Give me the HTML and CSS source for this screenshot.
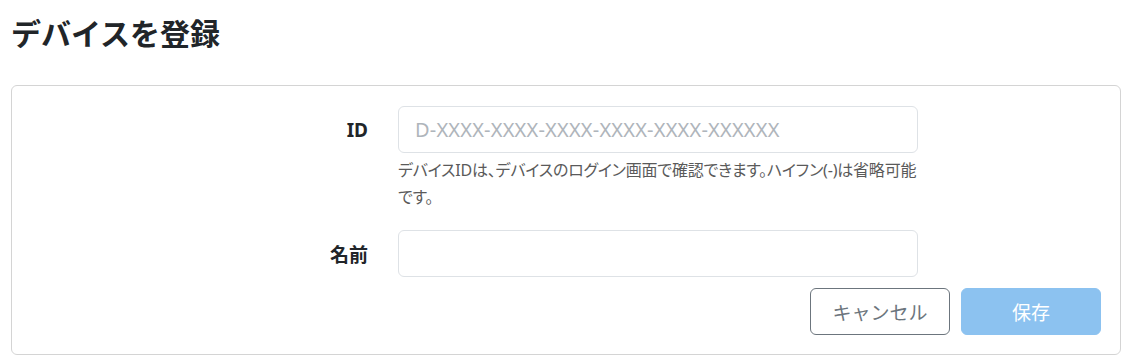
FILE: index.html
```html
<!DOCTYPE html>
<html lang="ja">
<head>
<meta charset="utf-8">
<title>デバイスを登録</title>
<link rel="stylesheet" href="styles.css">
</head>
<body>
<div class="page">
  <h1 class="title">デバイスを登録</h1>
  <form class="card">
    <div class="form-grid">
      <label class="label" for="device-id">ID</label>
      <input class="input" id="device-id" type="text" placeholder="D-XXXX-XXXX-XXXX-XXXX-XXXX-XXXXXX">
      <div class="spacer"></div>
      <p class="help">デバイスIDは、デバイスのログイン画面で確認できます。ハイフン(-)は省略可能<br>です。</p>
      <label class="label row2" for="device-name">名前</label>
      <input class="input row2" id="device-name" type="text">
    </div>
    <div class="actions">
      <button type="button" class="btn btn-cancel">キャンセル</button>
      <button type="button" class="btn btn-save" disabled>保存</button>
    </div>
  </form>
</div>
</body>
</html>
```
FILE: styles.css
```css
* { box-sizing: border-box; }
html, body { margin: 0; padding: 0; background: #fff; }
body {
  font-family: "Noto Sans", "Noto Sans CJK JP", sans-serif;
  color: #212529;
}
.page { padding: 0 8px 0 11px; }
.title {
  margin: 16px 0 33px;
  font-size: 30px;
  line-height: 36px;
  font-weight: 600;
  color: #212529;
}
.card {
  border: 1px solid #d4d4d4;
  border-radius: 6px;
  padding: 20px 19px 20px 0;
  margin: 0;
  height: 270px;
}
.form-grid {
  display: grid;
  grid-template-columns: 356px 520px;
  column-gap: 30px;
  align-items: center;
}
.label {
  justify-self: end;
  font-size: 19px;
  font-weight: 700;
  color: #212529;
}
.input {
  height: 47px;
  width: 520px;
  border: 1px solid #dee2e6;
  border-radius: 6px;
  padding: 0 16px;
  font-family: "Noto Sans", "Noto Sans CJK JP", sans-serif;
  font-size: 20px;
  letter-spacing: 0.2px;
  color: #212529;
  outline: none;
}
.input::placeholder { color: #afb5bb; }
.help {
  margin: 4px 0 0;
  font-size: 16px;
  line-height: 27px;
  letter-spacing: -0.2px;
  color: #5a5a5a;
  font-feature-settings: "palt";
  white-space: nowrap;
}
.row2 { margin-top: 19px; }
.actions {
  display: flex;
  justify-content: flex-end;
  gap: 11px;
  margin-top: 11px;
}
.btn {
  width: 140px;
  height: 47px;
  border-radius: 6px;
  font-family: "Noto Sans CJK JP", sans-serif;
  font-size: 19px;
  cursor: pointer;
}
.btn-cancel {
  background: #fff;
  border: 1px solid #6c757d;
  color: #6c757d;
}
.btn-save {
  background: #8cc2f0;
  border: 1px solid #8cc2f0;
  color: #fff;
}
```
